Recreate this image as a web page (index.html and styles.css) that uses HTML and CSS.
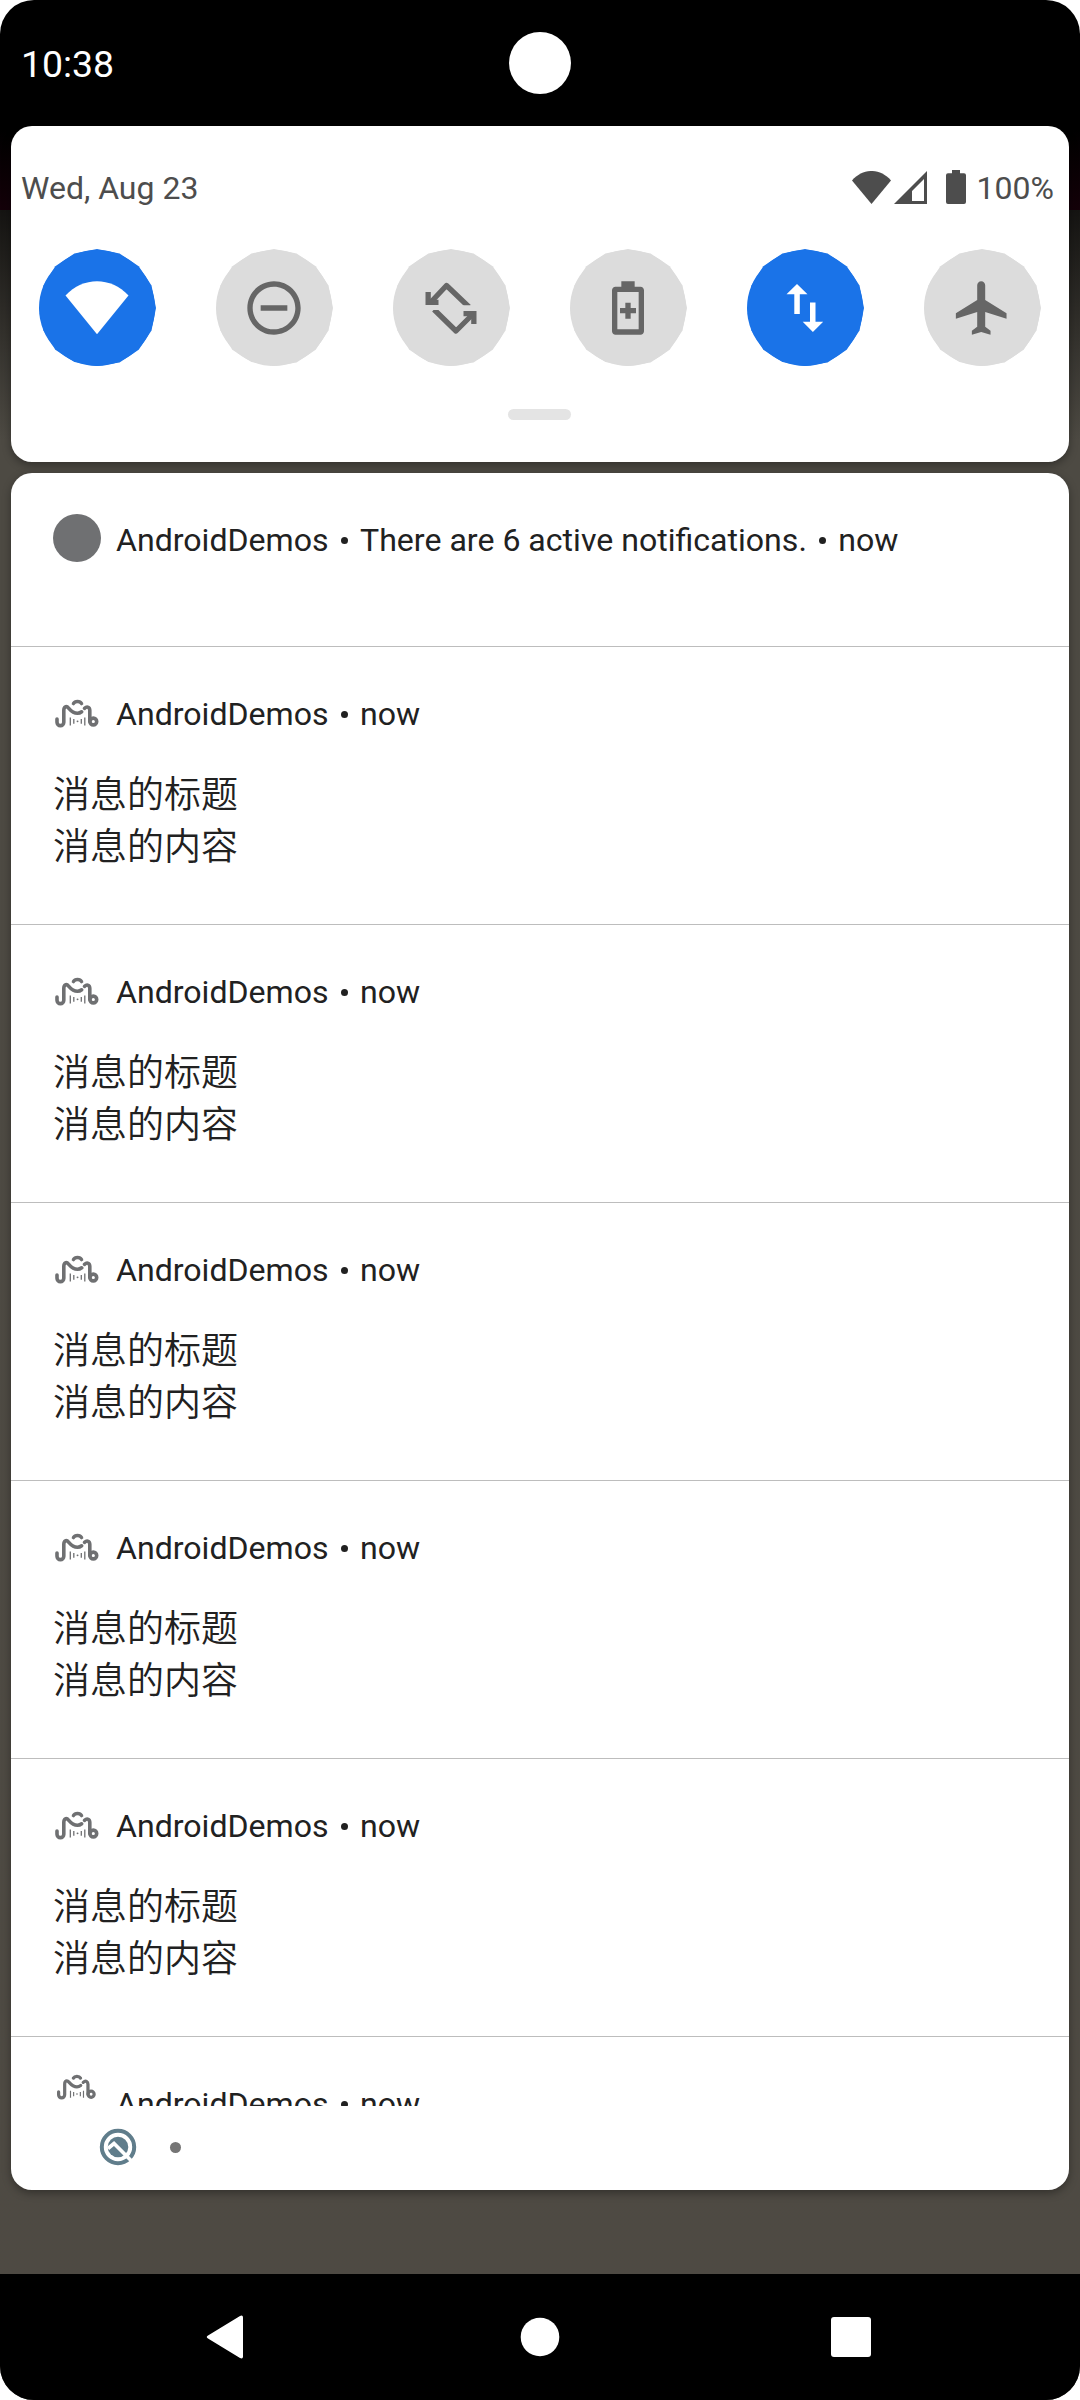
FILE: index.html
```html
<!DOCTYPE html>
<html lang="en">
<head>
<meta charset="utf-8">
<title>Notification shade</title>
<link rel="stylesheet" href="styles.css">
</head>
<body>
<svg class="defs" width="0" height="0">
  <defs>
    <symbol id="app" viewBox="0 0 48 48">
      <g fill="none" stroke="#6f7072" stroke-linecap="round">
        <path stroke-width="3.6" d="M4 29v3.200a3.400 3.400 0 0 0 6.800 0V20.500c0-4 2.500-5.200 5-2.200 3 3.500 6 5 8.700 5 1.700 0 3-.6 4.200-1.500M31.500 18.300c2.800-2.500 5.300-1 5.300 2.200V31.500"/>
        <circle cx="40.300" cy="31.500" r="3.400" stroke-width="3.600"/>
        <path stroke-width="3.600" d="M20.500 13.500c1.500-2.700 6.500-2.700 8 0"/>
        <path stroke-width="1.300" stroke-linecap="butt" d="M17.300 27.500v8M20.800 29v4.800M28.300 29v4.800M31.800 27.500v8"/>
        <path stroke-width="1.800" d="M24.500 31.300h.1"/>
      </g>
    </symbol>
    <symbol id="disc" viewBox="0 0 118 118">
      <circle cx="59" cy="59" r="58"/>
      <path d="M59 0 81.600 4.500 100.700 17.300 113.500 36.400 118 59 113.500 81.600 100.700 100.700 81.600 113.500 59 117 36.400 113 17.300 100.700 5.500 81.600 1.500 59 5.500 36.400 17.300 17.300 36.400 4.500z"/>
    </symbol>
  </defs>
</svg>
<div class="screen">
  <header class="status">
    <span class="clock">10:38</span>
    <span class="camera"></span>
  </header>

  <main class="shade">
    <section class="card quick">
      <div class="info">
        <span>Wed, Aug 23</span>
        <div class="signals">
          <svg class="wifi" viewBox="0 0 39 33"><path d="M0 9.500C11-3.200 28-3.200 39 9.500L19.500 33z"/></svg>
          <svg class="cell" viewBox="0 0 33 33"><path fill-rule="evenodd" d="M33 0v33H0zM30 8 18 20v10h12z"/></svg>
          <svg class="battery" viewBox="0 0 20 34"><path d="M6 0h8v3.300h4a2 2 0 0 1 2 2V32a2 2 0 0 1-2 2H2a2 2 0 0 1-2-2V5.300a2 2 0 0 1 2-2h4z"/></svg>
          <span>100%</span>
        </div>
      </div>
      <div class="tiles">
        <div class="tile on"><svg class="disc"><use href="#disc"/></svg>
          <svg class="glyph" viewBox="-32 -32 64 64"><path d="M-31.500-12.500C-14-31.500 14-31.500 31.500-12.500L0 26.300z"/></svg></div>
        <div class="tile"><svg class="disc"><use href="#disc"/></svg>
          <svg class="glyph" viewBox="0 0 24 24"><path d="M7 11v2h10v-2H7zm5-9C6.480 2 2 6.480 2 12s4.480 10 10 10 10-4.480 10-10S17.520 2 12 2zm0 18c-4.410 0-8-3.590-8-8s3.590-8 8-8 8 3.590 8 8-3.590 8-8 8z"/></svg></div>
        <div class="tile"><svg class="disc"><use href="#disc"/></svg>
          <svg class="glyph" viewBox="-32 -32 64 64">
            <g fill="none" stroke="#666" stroke-width="5.300" stroke-linejoin="round"><path d="M-19.500-6.500-4.500-22.500 18-1"/><path d="M-17 1.500 5 23 20.500 7.500"/></g>
            <path d="M-25.500-16h5.300v7.700h7.700v5.300h-13zM25.500 16h-5.300V8.300h-7.700V3h13z"/>
            <path class="cut" d="M8-2.700h16V2H8zM-24-2.900h16v5h-16z"/>
          </svg></div>
        <div class="tile"><svg class="disc"><use href="#disc"/></svg>
          <svg class="glyph" viewBox="0 0 24 24"><path fill-rule="evenodd" d="M9.500 2h5v2h2.200c.7 0 1.300.6 1.300 1.300v15.400c0 .7-.6 1.300-1.300 1.300H7.300c-.7 0-1.300-.6-1.300-1.300V5.300C6 4.600 6.600 4 7.300 4h2.200zM8 6v14h8V6z"/><path d="M11 10h2v2h2v2h-2v2h-2v-2H9v-2h2z"/></svg></div>
        <div class="tile on"><svg class="disc"><use href="#disc"/></svg>
          <svg class="glyph" viewBox="-32 -32 64 64"><path d="M-8-24 2.500-13.700h-7.700V6h-5.500v-19.700h-7.800zM5-5.500h5.500v19.200h7.700L7.900 24-2.300 13.700H5z"/></svg></div>
        <div class="tile"><svg class="disc"><use href="#disc"/></svg>
          <svg class="glyph" viewBox="0 0 24 24"><path d="M21.200 16v-2l-8-5V3.500c0-.83-.67-1.500-1.500-1.500s-1.500.67-1.500 1.500V9l-8 5v2l8-2.500V19l-2 1.500V22l3.500-1 3.500 1v-1.500l-2-1.500v-5.500z"/></svg></div>
      </div>
      <div class="handle"></div>
    </section>

    <section class="card list">
      <article class="note summary">
        <div class="head"><span class="dot"></span><span>AndroidDemos</span><i></i><span>There are 6 active notifications.</span><i></i><span>now</span></div>
      </article>
      <article class="note">
        <div class="head"><svg class="app"><use href="#app"/></svg><span>AndroidDemos</span><i></i><span>now</span></div>
        <p>消息的标题</p><p>消息的内容</p>
      </article>
      <article class="note">
        <div class="head"><svg class="app"><use href="#app"/></svg><span>AndroidDemos</span><i></i><span>now</span></div>
        <p>消息的标题</p><p>消息的内容</p>
      </article>
      <article class="note">
        <div class="head"><svg class="app"><use href="#app"/></svg><span>AndroidDemos</span><i></i><span>now</span></div>
        <p>消息的标题</p><p>消息的内容</p>
      </article>
      <article class="note">
        <div class="head"><svg class="app"><use href="#app"/></svg><span>AndroidDemos</span><i></i><span>now</span></div>
        <p>消息的标题</p><p>消息的内容</p>
      </article>
      <article class="note">
        <div class="head"><svg class="app"><use href="#app"/></svg><span>AndroidDemos</span><i></i><span>now</span></div>
        <p>消息的标题</p><p>消息的内容</p>
      </article>
      <article class="note clipped">
        <div class="head"><svg class="app" viewBox="0 0 48 48"><use href="#app"/></svg><span>AndroidDemos</span><i></i><span>now</span></div>
      </article>
      <footer class="shelf">
        <svg class="q" viewBox="0 0 38 38">
          <circle cx="19" cy="19" r="16.200" fill="none" stroke="#607d8b" stroke-width="4"/>
          <circle cx="19" cy="19" r="10.300" fill="#607d8b"/>
          <path d="M9 20.500 15 15.500 33 33.500" fill="none" stroke="#fff" stroke-width="3.600"/>
        </svg>
        <span class="more"></span>
      </footer>
    </section>
  </main>

  <nav class="nav">
    <svg viewBox="0 0 44 44"><path d="M1 20.500 33 .9q3-1.400 3 1.600v39q0 3-3 1.600L1 23.500q-2.500-1.500 0-3z"/></svg>
    <svg viewBox="0 0 44 44"><circle cx="22" cy="22" r="19.300"/></svg>
    <svg viewBox="0 0 44 44"><rect x="2" y="2" width="40" height="40" rx="3"/></svg>
  </nav>
</div>
</body>
</html>
```
FILE: styles.css
```css
* { box-sizing: border-box; }

body {
  margin: 0;
  background: #fff;
  font-family: Roboto, "Noto Sans CJK SC", sans-serif;
  color: #212121;
}

.defs { display: block; }

.screen {
  width: 1080px;
  height: 2400px;
  display: flex;
  flex-direction: column;
  border-radius: 34px;
  overflow: hidden;
  background: linear-gradient(#000 0, #000 130px, #140009 210px, #151412 210px, #4d4a43 440px, #4e4a43 100%);
}

.status {
  height: 126px;
  flex: none;
  display: grid;
  grid-template-columns: 1fr auto 1fr;
  align-items: center;
  padding: 0 21px;
  color: #fff;
}
.clock { font-size: 37.4px; line-height: 44px; padding-top: 1px; }
.camera { width: 62px; height: 62px; border-radius: 50%; background: #fff; }

.shade {
  height: 2148px;
  flex: none;
  padding: 0 11px;
  display: flex;
  flex-direction: column;
  gap: 11px;
}

.card {
  background: #fff;
  border-radius: 21px;
  box-shadow: 0 3px 8px rgba(0, 0, 0, .35);
  flex: none;
}

.quick { height: 336px; padding-top: 38px; }
.info {
  height: 46px;
  display: flex;
  justify-content: space-between;
  align-items: center;
  padding: 0 15px 0 10px;
  font-size: 32px;
  color: #4d4d4d;
}
.info span { padding-top: 2px; }
.signals { display: flex; align-items: center; fill: #4d4d4d; }
.wifi { width: 39px; height: 33px; }
.cell { width: 33px; height: 33px; margin-left: 3px; }
.battery { width: 20px; height: 34px; margin: 0 11px 0 19px; }

.tiles { display: flex; justify-content: space-between; padding: 39px 28px 0 27px; }
.tile { width: 118px; height: 118px; display: grid; place-items: center; fill: #666; }
.tile > svg { grid-area: 1 / 1; }
.disc { width: 118px; height: 118px; fill: #dcdcdc; }
.on .disc { fill: #1a73e8; }
.on { fill: #fff; }
.cut { fill: #dcdcdc; }
.glyph { width: 64px; height: 64px; margin-right: 1px; }
.handle { width: 63px; height: 11px; margin: 42px auto 0 497px; border-radius: 6px; background: #e4e4e4; }

.list { height: 1717px; overflow: hidden; }
.note { height: 278px; padding: 43px 42px 0; border-bottom: 1px solid #bdbdbd; }
.head { display: flex; align-items: center; height: 48px; font-size: 32.1px; white-space: nowrap; }
.head i { width: 7px; height: 7px; border-radius: 50%; background: #212121; margin: 0 12.500px 0 12px; }
.app, .dot { width: 48px; height: 48px; margin-right: 15px; flex: none; }
.dot { border-radius: 50%; background: #6f7072; margin-top: -4px; }
.note p { margin: 0; font-size: 37px; font-weight: 350; line-height: 52px; }
.head + p { padding-top: 32px; }
.summary { height: 174px; padding-top: 43px; }
.clipped { height: 69px; overflow: hidden; border-bottom: 0; }
.clipped .app { width: 43px; height: 43px; margin: -14px 18px 0 2px; align-self: flex-start; }

.shelf { height: 84px; display: flex; align-items: center; padding: 0 0 2px 88px; }
.q { width: 38px; height: 38px; }
.more { width: 11px; height: 11px; border-radius: 50%; background: #757575; margin-left: 33px; }

.nav { height: 126px; flex: none; display: flex; justify-content: center; align-items: center; gap: 267px; background: #000; fill: #fff; }
.nav svg { width: 44px; height: 44px; overflow: visible; }
```
